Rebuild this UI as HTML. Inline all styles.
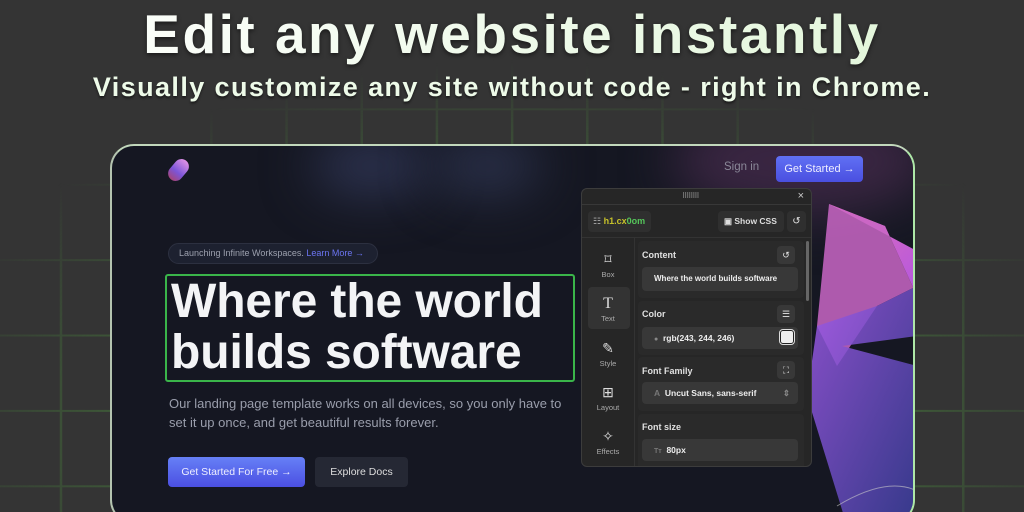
<!DOCTYPE html>
<html><head><meta charset="utf-8"><style>
*{margin:0;padding:0;box-sizing:border-box}
html,body{width:1024px;height:512px;overflow:hidden}
body{background:#343434;font-family:"Liberation Sans",sans-serif;position:relative}
.grid{position:absolute;inset:0;background-image:linear-gradient(90deg,transparent 60px,#3e5a38 60px,#3e5a38 62px,transparent 62px),linear-gradient(transparent 33px,#3e5a38 33px,#3e5a38 35px,transparent 35px);background-size:75.2px 100%,100% 75.4px;-webkit-mask-image:radial-gradient(ellipse 600px 360px at 512px 420px,#000 65%,transparent 100%);}
h1{position:absolute;top:2px;left:0;width:1024px;text-align:center;font-size:55px;font-weight:bold;color:#e8f8e4;background:linear-gradient(90deg,#fff,#dff5d6);-webkit-background-clip:text;-webkit-text-fill-color:transparent;filter:drop-shadow(0 2px 2px rgba(0,0,0,.5));letter-spacing:2.5px}
h2{position:absolute;top:72px;left:0;width:1024px;text-align:center;font-size:27px;font-weight:bold;color:#eefbe9;text-shadow:0 2px 2px rgba(0,0,0,.5);letter-spacing:1.4px}
.card{position:absolute;left:110px;top:144px;width:805px;height:380px;border-radius:24px;border:2px solid #b4c4b0;border-right-color:#aee8a8;border-top-color:#c2d8bc;background:#151722;overflow:hidden}
.glow{position:absolute;border-radius:50%;filter:blur(25px)}
.logo{position:absolute;left:59px;top:12px;width:15px;height:24px;border-radius:8px;background:linear-gradient(180deg,#e092e6,#7c55d8 60%,#a5457a);transform:rotate(40deg)}
.nav{position:absolute;top:15px;font-size:11.5px}
.btn{position:absolute;border-radius:4px;font-size:10.5px;color:#eef;display:flex;align-items:center;justify-content:center}
.pill{position:absolute;left:56px;top:97px;width:210px;height:21px;border-radius:11px;background:#1d2130;border:1px solid #2c3040;font-size:9px;color:#9ca0ae;padding-left:10px;line-height:19px}
.hero{position:absolute;left:53px;top:128px;width:410px;height:108px;border:2.5px solid #3ab54a;border-radius:3px;color:#f3f4f6;font-weight:bold;font-size:48px;line-height:51px;padding:0 0 0 4px;letter-spacing:-.1px}
.p{position:absolute;left:57px;top:248px;font-size:13px;line-height:19px;color:#9a9eac}
.panel{position:absolute;left:581px;top:188px;width:231px;height:279px;background:#262626;border:1px solid #3c3c3c;border-radius:6px;overflow:hidden;color:#e6e6e6}
.box{position:absolute;background:#2f2f2f;border-radius:4px}
.lbl{position:absolute;font-size:9px;font-weight:bold;color:#e0e0e0}
.side{position:absolute;left:0;width:52px;text-align:center;font-size:7.5px;color:#aaa}
.side .ic{font-size:14px;color:#ddd;display:block;height:16px;margin-bottom:3px}
.val{position:absolute;font-size:8.5px;font-weight:bold;color:#eee;line-height:24px;padding-left:12px}
</style></head><body>
<div class="grid"></div>
<h1>Edit any website instantly</h1>
<h2>Visually customize any site without code - right in Chrome.</h2>
<div class="card">
 <div class="glow" style="left:200px;top:-10px;width:120px;height:60px;background:#2d3350"></div>
 <div class="glow" style="left:320px;top:-10px;width:110px;height:60px;background:#2a3049"></div>
 <div class="glow" style="left:560px;top:-40px;width:260px;height:110px;background:#3a2642"></div>
 <svg style="position:absolute;left:695px;top:40px" width="110" height="330" viewBox="0 0 110 330">
  <defs><linearGradient id="g1" x1="0" y1="0" x2="1" y2="1"><stop offset="0" stop-color="#e46fb4"/><stop offset="1" stop-color="#b458e0"/></linearGradient>
  <linearGradient id="g2" x1="0" y1="0" x2="1" y2="1"><stop offset="0" stop-color="#a05ae8"/><stop offset="1" stop-color="#3a3f9c"/></linearGradient></defs>
  <polygon points="22,18 110,65 110,110 78,40" fill="url(#g1)"/>
  <polygon points="22,18 78,40 110,110 110,100 70,120 30,180 10,140" fill="#c966c6" opacity=".85"/>
  <polygon points="10,140 70,120 110,100 110,150 35,160 110,180 110,330 40,340 0,210" fill="url(#g2)" opacity=".85"/>
  <path d="M30 320 Q80 290 110 305" stroke="#ccc" fill="none" stroke-width="1" opacity=".6"/>
 </svg>
 <div class="logo"></div>
 <div class="nav" style="left:612px;color:#8a8898">Sign in</div>
 <div class="btn" style="left:664px;top:10px;width:87px;height:26px;background:linear-gradient(#6070f4,#4a4fe0);font-size:11px">Get Started →</div>
 <div class="pill">Launching Infinite Workspaces. <span style="color:#6b74f0">Learn More →</span></div>
 <div class="hero">Where the world<br>builds software</div>
 <div class="p">Our landing page template works on all devices, so you only have to<br>set it up once, and get beautiful results forever.</div>
 <div class="btn" style="left:56px;top:311px;width:137px;height:30px;background:linear-gradient(#6680f6,#4b4fe2)">Get Started For Free →</div>
 <div class="btn" style="left:203px;top:311px;width:93px;height:30px;background:#252834;color:#ddd">Explore Docs</div>
</div>
<div class="panel">
 <div style="position:absolute;top:0;left:0;right:0;height:16px;border-bottom:1px solid #383838"></div>
 <div style="position:absolute;left:100px;top:3px;font-size:7px;color:#bbb;letter-spacing:-1px">⠿⠿⠿⠿</div>
 <div style="position:absolute;right:7px;top:1px;font-size:11px;color:#ccc">×</div>
 <div class="box" style="left:6px;top:22px;width:63px;height:21px"></div>
 <div style="position:absolute;left:11px;top:27px;font-size:9px;color:#aaa">☷ <b style="color:#c7c22a">h1.cx</b><b style="color:#55c55a">0om</b></div>
 <div class="box" style="left:136px;top:22px;width:66px;height:21px;font-size:8.5px;font-weight:bold;line-height:21px;padding-left:6px;color:#ddd">▣ Show CSS</div>
 <div class="box" style="left:205px;top:22px;width:19px;height:21px;font-size:10px;text-align:center;line-height:21px">↺</div>
 <div style="position:absolute;left:0;top:48px;width:231px;border-top:1px solid #333"></div>
 <div style="position:absolute;left:52px;top:48px;width:1px;height:240px;background:#333"></div>
 <div class="side" style="top:62px"><span class="ic">⌑</span>Box</div>
 <div class="box" style="left:6px;top:98px;width:42px;height:42px;background:#333"></div>
 <div class="side" style="top:106px"><span class="ic" style="font-size:16px;font-family:'Liberation Serif'">T</span>Text</div>
 <div class="side" style="top:151px"><span class="ic">✎</span>Style</div>
 <div class="side" style="top:195px"><span class="ic">⊞</span>Layout</div>
 <div class="side" style="top:239px"><span class="ic">✧</span>Effects</div>
 <div class="box" style="left:56px;top:52px;width:166px;height:57px;background:#2a2a2a"></div>
 <div class="lbl" style="left:60px;top:61px">Content</div>
 <div class="box" style="left:195px;top:57px;width:18px;height:18px;background:#383838;font-size:9px;text-align:center;line-height:18px">↺</div>
 <div class="box val" style="left:60px;top:78px;width:156px;height:24px;background:#383838;font-size:8px">Where the world builds software</div>
 <div class="box" style="left:56px;top:112px;width:166px;height:54px;background:#2a2a2a"></div>
 <div class="lbl" style="left:60px;top:120px">Color</div>
 <div class="box" style="left:195px;top:116px;width:18px;height:18px;background:#383838;font-size:9px;text-align:center;line-height:18px">☰</div>
 <div class="box val" style="left:60px;top:138px;width:156px;height:22px;background:#383838;line-height:22px">
  <span style="color:#888;font-size:7px">●</span>&nbsp; rgb(243, 244, 246)</div>
 <div style="position:absolute;left:198px;top:141px;width:14px;height:14px;border-radius:3px;background:#eee;border:1.5px solid #222;outline:1px solid #ddd"></div>
 <div class="box" style="left:56px;top:168px;width:166px;height:54px;background:#2a2a2a"></div>
 <div class="lbl" style="left:60px;top:177px">Font Family</div>
 <div class="box" style="left:195px;top:172px;width:18px;height:18px;background:#383838;font-size:9px;text-align:center;line-height:18px">⛶</div>
 <div class="box val" style="left:60px;top:193px;width:156px;height:22px;background:#383838;line-height:22px"><span style="color:#777">A</span>&nbsp; Uncut Sans, sans-serif <span style="float:right;margin-right:8px;color:#888">⇕</span></div>
 <div class="box" style="left:56px;top:225px;width:166px;height:60px;background:#2a2a2a"></div>
 <div class="lbl" style="left:60px;top:233px">Font size</div>
 <div class="box val" style="left:60px;top:250px;width:156px;height:22px;background:#383838;line-height:22px"><span style="color:#777;font-size:7px">Tт</span>&nbsp; 80px</div>
 <div style="position:absolute;left:224px;top:52px;width:3px;height:60px;border-radius:2px;background:#666"></div>
</div>
</body></html>
